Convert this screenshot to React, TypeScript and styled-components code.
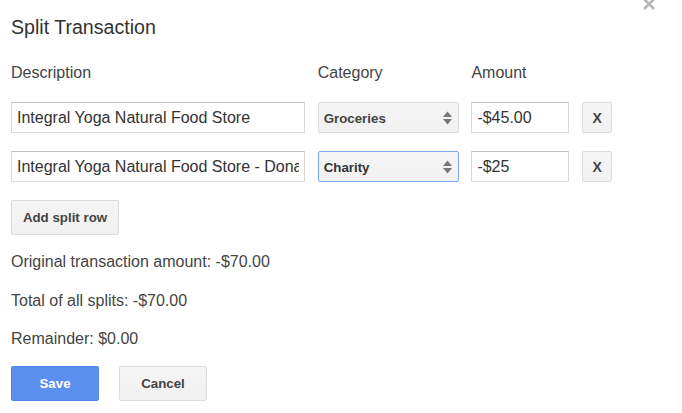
import React from "react";
import styled, { createGlobalStyle } from "styled-components";

const GlobalStyle = createGlobalStyle`
  html, body {
    margin: 0;
    padding: 0;
    background: #fff;
  }
  body {
    font-family: "Liberation Sans", Arial, sans-serif;
    color: #444;
    overflow: hidden;
  }
`;

const Dialog = styled.div`
  position: relative;
  width: 682px;
  height: 413px;
  padding: 16px 0 0 11px;
  box-sizing: border-box;
  overflow: hidden;
  background: linear-gradient(to right, #fff 675px, #fdfdfd 675px);
`;

const Title = styled.h1`
  margin: 0;
  font-size: 19.6px;
  line-height: 22px;
  font-weight: 400;
  color: #333;
`;

const Grid = styled.div`
  display: grid;
  grid-template-columns: 294px 141px 98px 30px;
  column-gap: 12.7px;
  row-gap: 18px;
  margin-top: 25px;
  align-items: center;
`;

const Heading = styled.div`
  font-size: 16px;
  line-height: 20px;
  color: #444;
  margin-bottom: 1px;
`;

const TextField = styled.input`
  box-sizing: border-box;
  width: 100%;
  height: 31px;
  padding: 0 5px;
  border: 1px solid #d9d9d9;
  border-top-color: #c0c0c0;
  border-radius: 1px;
  background: #fff;
  font: 16px "Liberation Sans", Arial, sans-serif;
  color: #333;
  outline: none;
`;

const SelectBox = styled.div<{ $focused?: boolean }>`
  box-sizing: border-box;
  height: 31px;
  padding: 1px 6px 0 5px;
  display: flex;
  align-items: center;
  justify-content: space-between;
  border: 1px solid ${(p) => (p.$focused ? "#7aa5f7" : "#dcdcdc")};
  border-radius: 2px;
  background: linear-gradient(#f5f5f5, #f1f1f1);
  font-size: 13.3px;
  font-weight: 700;
  color: ${(p) => (p.$focused ? "#333" : "#444")};
`;

const Button = styled.button`
  box-sizing: border-box;
  height: 35px;
  padding: 0 10px;
  border: 1px solid #dcdcdc;
  border-radius: 2px;
  background: linear-gradient(#f5f5f5, #f1f1f1);
  font: 700 13.3px "Liberation Sans", Arial, sans-serif;
  color: #444;
`;

const RemoveButton = styled(Button)`
  width: 30px;
  height: 31px;
  padding: 1px 0 0;
  font-size: 14px;
`;

const AddButton = styled(Button)`
  display: block;
  width: 108px;
  margin-top: 18px;
  padding: 0;
`;

const Summary = styled.p`
  margin: 0;
  font-size: 16px;
  line-height: 20px;
  color: #444;
`;

const SummaryList = styled.div`
  display: flex;
  flex-direction: column;
  gap: 18.5px;
  margin-top: 17px;
`;

const Actions = styled.div`
  display: flex;
  gap: 20px;
  margin-top: 17px;
`;

const ActionButton = styled(Button)<{ $primary?: boolean }>`
  width: 88px;
  padding: 0;
  ${(p) =>
    p.$primary &&
    `
    background: #5a8ff0;
    border-color: #4f86ec;
    color: #fff;
  `}
`;

const CloseIcon = styled.svg`
  position: absolute;
  top: -3px;
  right: 26px;
  width: 14px;
  height: 14px;
`;

function Arrows() {
  return (
    <svg width="9" height="14" viewBox="0 0 9 14">
      <path d="M4.5 0.5 L9 6 H0 Z M0 8 H9 L4.5 13.5 Z" fill="#777" />
    </svg>
  );
}

export default function App() {
  return (
    <Dialog>
      <GlobalStyle />
      <CloseIcon viewBox="0 0 14 14">
        <path d="M2 2 L12 12 M12 2 L2 12" stroke="#b5b5b5" strokeWidth="2.6" />
      </CloseIcon>
      <Title>Split Transaction</Title>
      <Grid>
        <Heading>Description</Heading>
        <Heading>Category</Heading>
        <Heading>Amount</Heading>
        <span />
        <TextField readOnly value="Integral Yoga Natural Food Store" />
        <SelectBox>
          Groceries
          <Arrows />
        </SelectBox>
        <TextField readOnly value="-$45.00" />
        <RemoveButton>X</RemoveButton>
        <TextField readOnly value="Integral Yoga Natural Food Store - Donation" />
        <SelectBox $focused>
          Charity
          <Arrows />
        </SelectBox>
        <TextField readOnly value="-$25" />
        <RemoveButton>X</RemoveButton>
      </Grid>
      <AddButton>Add split row</AddButton>
      <SummaryList>
        <Summary>Original transaction amount: -$70.00</Summary>
        <Summary>Total of all splits: -$70.00</Summary>
        <Summary>Remainder: $0.00</Summary>
      </SummaryList>
      <Actions>
        <ActionButton $primary>Save</ActionButton>
        <ActionButton>Cancel</ActionButton>
      </Actions>
    </Dialog>
  );
}
